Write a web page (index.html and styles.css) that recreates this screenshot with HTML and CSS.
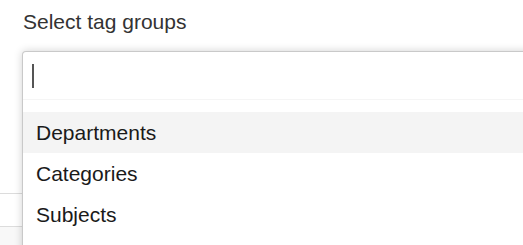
FILE: index.html
```html
<!DOCTYPE html>
<html>
<head>
<meta charset="utf-8">
<link rel="stylesheet" href="styles.css">
</head>
<body>
<div class="page">
  <label class="label">Select tag groups</label>
  <div class="field">
    <div class="behind">
      <div class="behind-row"></div>
      <div class="behind-row alt"></div>
      <div class="behind-row"></div>
    </div>
    <div class="dropdown">
      <div class="search"><span class="cursor"></span></div>
      <ul class="options">
        <li class="option active">Departments</li>
        <li class="option">Categories</li>
        <li class="option">Subjects</li>
      </ul>
    </div>
  </div>
</div>
</body>
</html>
```
FILE: styles.css
```css
html, body {
  margin: 0;
  padding: 0;
  background: #ffffff;
  overflow: hidden;
  width: 523px;
  height: 245px;
}
.page {
  font-family: "Liberation Sans", Arial, sans-serif;
  padding-top: 10px;
}
.label {
  display: block;
  margin-left: 23px;
  font-size: 21px;
  line-height: 24px;
  color: #333333;
}
.field {
  position: relative;
  margin-top: 17px;
  height: 200px;
}
.behind {
  padding-top: 142px;
}
.behind-row {
  height: 32px;
  border-top: 1px solid #dcdcdc;
  background: #ffffff;
}
.behind-row.alt {
  background: #f8f8f8;
}
.dropdown {
  position: absolute;
  left: 22px;
  top: 0;
  width: 620px;
  background: #ffffff;
  border: 1px solid #c9c9c9;
  border-bottom: none;
  border-radius: 4px 0 0 0;
  box-shadow: 0 0 8px rgba(0, 0, 0, 0.18);
}
.search {
  height: 47px;
  border-bottom: 1px solid #f5f5f5;
  display: flex;
  align-items: center;
  padding-left: 9px;
}
.cursor {
  display: block;
  width: 2px;
  height: 24px;
  background: #555555;
}
.options {
  list-style: none;
  margin: 0;
  padding: 12px 0 30px 0;
}
.option {
  height: 41px;
  line-height: 41px;
  padding-left: 13px;
  font-size: 21px;
  color: #1a1a1a;
}
.option.active {
  background: #f4f4f4;
}
```
